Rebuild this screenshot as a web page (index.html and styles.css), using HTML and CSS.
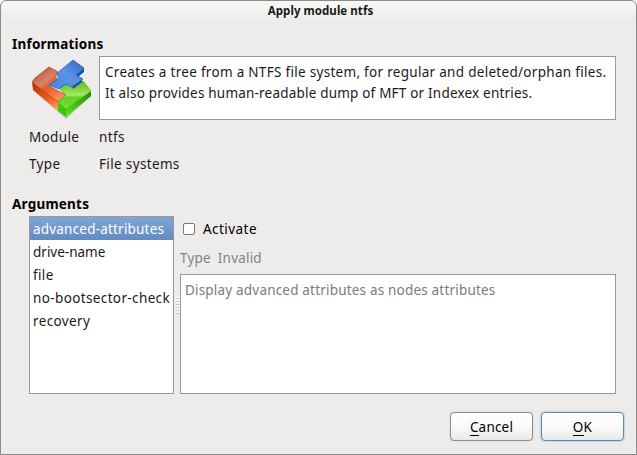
FILE: index.html
```html
<!DOCTYPE html>
<html lang="en">
<head>
<meta charset="utf-8">
<title>Apply module ntfs</title>
<link rel="stylesheet" href="styles.css">
</head>
<body>
<main class="dialog">
  <header class="titlebar">Apply module ntfs</header>
  <section class="informations">
    <h2 class="heading info-heading">Informations</h2>
    <div class="summary">
      <svg class="logo" viewBox="0 0 75 75" width="75" height="75" aria-hidden="true">
        <defs>
          <linearGradient id="red" x1="0" y1="0" x2=".7" y2="1"><stop offset="0" stop-color="#a8452e"/><stop offset=".45" stop-color="#d98468"/><stop offset=".6" stop-color="#e05a28"/><stop offset="1" stop-color="#f89060"/></linearGradient>
          <linearGradient id="redside" x1="0" y1="0" x2="1" y2="1"><stop offset="0" stop-color="#b02f08"/><stop offset=".6" stop-color="#ee5a1c"/><stop offset="1" stop-color="#ffa860"/></linearGradient>
          <linearGradient id="blue" x1="1" y1="0" x2="0" y2="1"><stop offset="0" stop-color="#3467c2"/><stop offset=".5" stop-color="#5b93e4"/><stop offset="1" stop-color="#3f86e6"/></linearGradient>
          <linearGradient id="green" x1="0" y1="0" x2="0" y2="1"><stop offset="0" stop-color="#5cb81c"/><stop offset=".5" stop-color="#a4ea62"/><stop offset=".6" stop-color="#62cf22"/><stop offset="1" stop-color="#7be63c"/></linearGradient>
          <linearGradient id="greenside" x1="0" y1="1" x2="1" y2="0"><stop offset="0" stop-color="#62e51c"/><stop offset="1" stop-color="#1b8a05"/></linearGradient>
        </defs>
        <path d="M8 39 41 68 66 45Z" fill="#c4c4c2"/>
        <path d="M7 31 33 50V60L8 39Z" fill="url(#redside)"/>
        <path d="M7 31 10 27 24 16 33 21 30 24 32 28 24 35 41 44 33 51Z" fill="url(#red)" stroke="#c23a12" stroke-width=".7"/>
        <path d="M33 51 41 58V66L33 60Z" fill="#37c90a"/>
        <path d="M41 58 66 40V45L41 66Z" fill="url(#greenside)"/>
        <path d="M33 51 41 44 35 38 42 31 50 35 58 30 66 40 41 58Z" fill="url(#green)" stroke="#48b60e" stroke-width=".7"/>
        <path d="M51 24 59 17V21L53 26ZM47 35 57 28V31L48 38Z" fill="#1a4e9d"/>
        <path d="M24 34 34 27 31 23 48 9 59 17 51 24 58 28 47 36 41 33 34 38Z" fill="url(#blue)" stroke="#235fbe" stroke-width=".7"/>
      </svg>
      <p class="box description"><span class="line one">Creates a tree from a NTFS file system, for regular and deleted/orphan files.</span><span class="line two">It also provides human-readable dump of MFT or Indexex entries.</span></p>
    </div>
    <dl class="facts">
      <dt>Module</dt><dd>ntfs</dd>
      <dt>Type</dt><dd class="systems">File systems</dd>
    </dl>
  </section>
  <section class="arguments">
    <h2 class="heading args-heading">Arguments</h2>
    <div class="panes">
      <ul class="box list">
        <li class="selected">advanced-attributes</li>
        <li class="drive">drive-name</li>
        <li class="check">file</li>
        <li class="check">no-bootsector-check</li>
        <li class="check">recovery</li>
      </ul>
      <div class="splitter"><i></i></div>
      <div class="detail">
        <label class="activate"><span class="checkbox"></span>Activate</label>
        <div class="type"><span>Type</span><span>Invalid</span></div>
        <div class="box help">Display advanced attributes as nodes attributes</div>
      </div>
    </div>
  </section>
  <footer class="actions">
    <button class="button"><span class="key">C</span>ancel</button>
    <button class="button default"><span class="key">O</span>K</button>
  </footer>
</main>
</body>
</html>
```
FILE: styles.css
```css
* { box-sizing: border-box; }
body { margin: 0; background: #fff; }
.dialog {
  width: 637px; height: 455px;
  border: 1px solid #8b8b8a; border-radius: 6px 6px 0 0;
  background: linear-gradient(#f8f8f7, #edeceb 19px);
  color: #1a1a1a; font: 13.5px/20px "Noto Sans", "Open Sans", sans-serif;
  white-space: nowrap; overflow: hidden;
}
.titlebar { height: 33px; padding-top: 1px; padding-left: 4px; text-align: center; font-size: 11.5px; line-height: 18px; font-weight: 700; letter-spacing: .05px; }
.heading { margin: 0 0 0 11px; height: 22px; font-size: 13.5px; line-height: 20px; font-weight: 700; color: #000; letter-spacing: .22px; }
.summary { display: flex; height: 64px; padding-left: 24px; }
.logo { flex: none; margin-top: -5px; }
.box { margin: 0; background: #fff; border: 1px solid #9a9996; }
.description { width: 517px; margin-left: -1px; padding: 5px 5px 0; line-height: 21px; }
.line { display: block; }
.one { letter-spacing: .295px; }
.two { letter-spacing: .2px; }
.facts { display: grid; grid-template-columns: 70px auto; grid-auto-rows: 27px; margin: 7px 0 0 28px; height: 67px; letter-spacing: .35px; }
.facts dd { margin: 0; }
.panes { display: flex; height: 178px; margin-left: 28px; }
.args-heading { height: 22px; }
.list { width: 145px; padding: 0; list-style: none; }
.list li { height: 23px; padding-left: 3px; line-height: 24px; }
.list .selected { color: #fff; background: linear-gradient(#80a6d8, #638bc1); letter-spacing: .2px; }
.list .check { letter-spacing: .37px; }
.splitter { width: 6px; display: flex; justify-content: center; align-items: center; }
.splitter i { width: 5px; height: 17px; background: radial-gradient(circle, #aaa 35%, #f5f5f4 45%) 0 0 / 2.5px 3px; }
.detail { width: 436px; }
.activate { display: flex; align-items: center; height: 26px; color: #000; letter-spacing: .45px; }
.checkbox { width: 12px; height: 12px; margin: 0 8px 0 3px; border: 1px solid #777672; border-radius: 2px; background: #fff; }
.type { display: flex; gap: 7px; height: 32px; padding-top: 6px; color: #858482; letter-spacing: .2px; }
.help { height: 120px; padding: 5px 4px; color: #7c7b79; letter-spacing: .19px; }
.actions { display: flex; gap: 8px; justify-content: flex-end; padding: 18px 12px 0 0; }
.button { width: 83px; height: 29px; padding: 1px 0 0; border: 1px solid #908d89; border-radius: 4px; background: linear-gradient(#fff, #fafafa 50%, #e8e8e7); font: inherit; color: #000; letter-spacing: .2px; box-shadow: 0 0 1px #aaa; }
.default { border-color: #6087b5; box-shadow: 0 0 2px #729fcf; }
.key { display: inline-block; border-bottom: 1px solid #000; line-height: 16px; }
```
